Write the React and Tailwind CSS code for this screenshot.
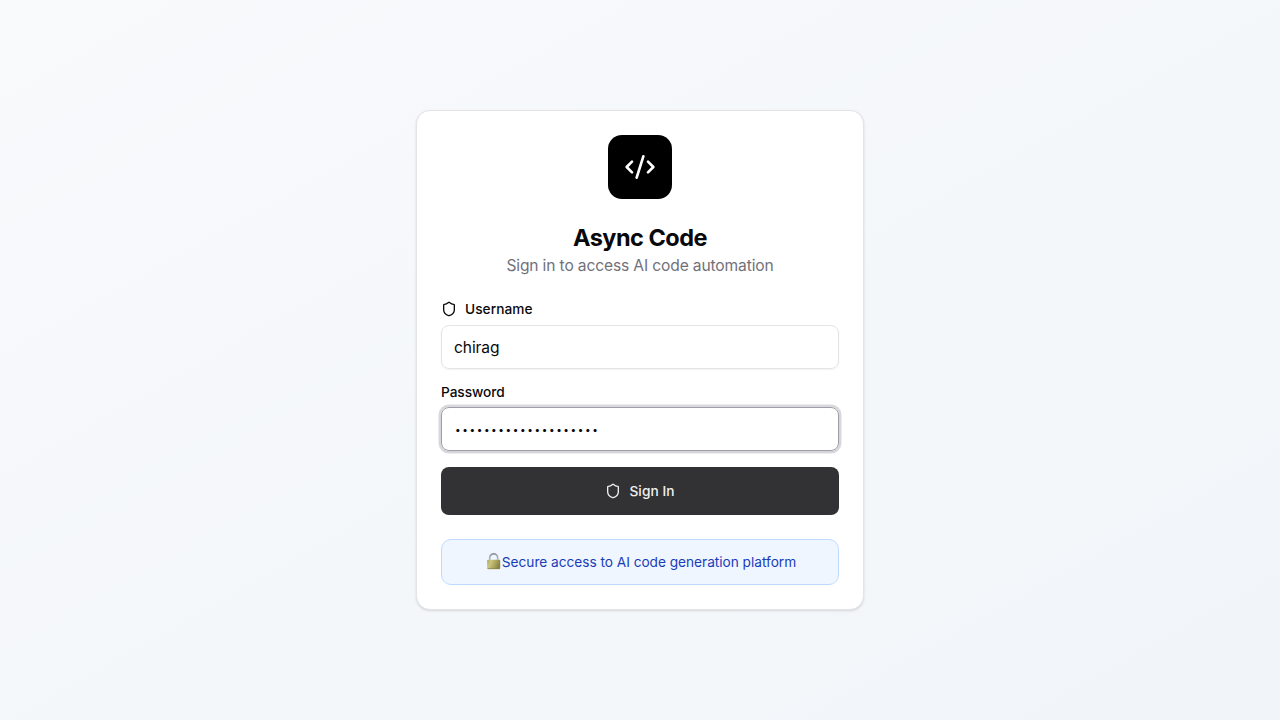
import React from "react";
import { Code2, Shield } from "lucide-react";

function LockIcon() {
  return (
    <svg width="17" height="18" viewBox="0 0 17 18" className="shrink-0">
      <defs>
        <linearGradient id="lockBody" x1="0" y1="0" x2="1" y2="0.3">
          <stop offset="0" stopColor="#a9a352" />
          <stop offset="0.3" stopColor="#cbc583" />
          <stop offset="0.6" stopColor="#b3ab62" />
          <stop offset="1" stopColor="#8b8346" />
        </linearGradient>
        <linearGradient id="lockShackle" x1="0" y1="0" x2="0" y2="1">
          <stop offset="0" stopColor="#8f979e" />
          <stop offset="1" stopColor="#c3cad0" />
        </linearGradient>
      </defs>
      <path d="M4.7 8V4.9a4 4 0 0 1 8 0V8" fill="none" stroke="url(#lockShackle)" strokeWidth="1.7" />
      <rect x="2.2" y="6.7" width="13" height="9.4" rx="0.8" fill="url(#lockBody)" />
      <path d="M2.6 15.7h12.2" stroke="#8b8346" strokeWidth="0.8" />
    </svg>
  );
}

export default function App() {
  return (
    <div className="flex min-h-screen items-center justify-center bg-linear-to-br from-slate-50 to-slate-100 font-['Inter',sans-serif] text-[#09090b]">
      <div className="flex w-[448px] flex-col gap-6 rounded-[14px] border border-[#e4e4e7] bg-white py-6 shadow-sm">
        <div className="flex flex-col items-center px-6">
          <div className="mb-6 flex h-16 w-16 items-center justify-center rounded-[14px] bg-black">
            <Code2 className="h-8 w-8 text-white" />
          </div>
          <h1 className="text-[23.5px] leading-[30px] font-bold tracking-[-0.5px]">Async Code</h1>
          <p className="pt-0.5 text-[15.6px] leading-[22px] tracking-[-0.14px] text-[#71717b]">Sign in to access AI code automation</p>
        </div>
        <div className="px-6">
          <label className="flex items-center gap-2 text-[13.7px] leading-3.5 font-medium tracking-[0.03px]">
            <Shield className="h-4 w-4" />
            Username
          </label>
          <input type="text" defaultValue="chirag" className="mt-2 block h-11 w-full rounded-lg border border-[#e4e4e7] px-3 text-[15.6px] tracking-[-0.12px] shadow-xs outline-none" />
          <label className="mt-4 block text-[13.7px] leading-3.5 font-medium tracking-[-0.07px]">Password</label>
          <input type="password" defaultValue="abcdefghijklmnopqrst" className="mt-2 block h-11 w-full rounded-lg border border-[#9f9fa9] px-3 pl-[13px] text-[10px] tracking-[1.6px] shadow-xs ring-[2.5px] ring-[#9f9fa9]/40 outline-none" />
          <button className="mt-4 flex h-12 w-full items-center justify-center gap-2 rounded-lg bg-[#323234] text-[13.7px] font-medium tracking-[0.06px] text-[#f0f0f0]">
            <Shield className="h-4 w-4" />
            Sign In
          </button>
          <div className="mt-6 flex h-[46px] items-center justify-center rounded-[10px] border border-blue-200 bg-blue-50 pl-px text-[13.7px] tracking-[-0.03px] text-blue-800">
            <LockIcon />
            <span>Secure access to AI code generation platform</span>
          </div>
        </div>
      </div>
    </div>
  );
}
